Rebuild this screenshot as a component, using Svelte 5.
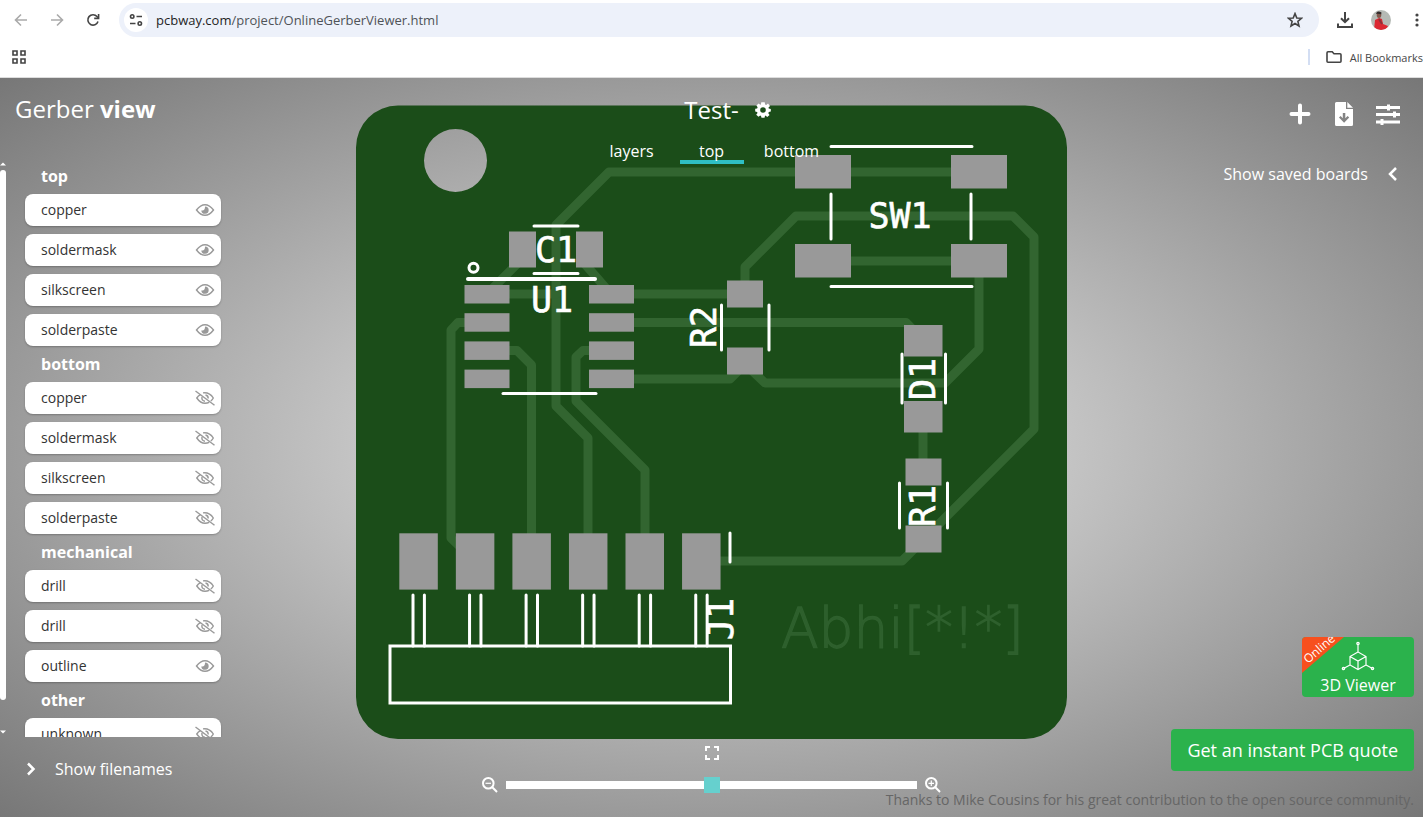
<!--
	Gerber Viewer

	Browser bar on top, board render with its layer list and controls below
-->
<script>
	let url = { host: 'pcbway.com', path: '/project/OnlineGerberViewer.html' };
	let boardName = 'Test-';
	let activeView = 'top';
	let zoom = 50;

	const views = ['layers', 'top', 'bottom'];

	let groups = [
		{
			name: 'top',
			layers: [
				{ name: 'copper', visible: true },
				{ name: 'soldermask', visible: true },
				{ name: 'silkscreen', visible: true },
				{ name: 'solderpaste', visible: true }
			]
		},
		{
			name: 'bottom',
			layers: [
				{ name: 'copper', visible: false },
				{ name: 'soldermask', visible: false },
				{ name: 'silkscreen', visible: false },
				{ name: 'solderpaste', visible: false }
			]
		},
		{
			name: 'mechanical',
			layers: [
				{ name: 'drill', visible: false },
				{ name: 'drill', visible: false },
				{ name: 'outline', visible: true }
			]
		},
		{
			name: 'other',
			layers: [{ name: 'unknown', visible: false }]
		}
	];

	// Copper traces, board units
	const traces = [
		'M979 172H609L556 225V406L588 438V561',
		'M645 561V470L576 401V357L583 350.5H611',
		'M487 294H556',
		'M523 258L487 294',
		'M584 263L611 294H745',
		'M611 322.5H906L923 340',
		'M611 379H730L745 364L765 383H945L979 349V261H823',
		'M745 294V267L796 216H1013L1034 237V429L923 540L902 561H701',
		'M487 322.5H458L451 330V538L475 561',
		'M487 350.5H517L531.5 365V561',
		'M923 417V472'
	];

	// Pads as [x, y, width, height]
	const pads = [
		[509, 231.5, 27, 36],
		[576, 231.5, 27, 36],
		[795, 155, 56, 33.5],
		[951, 155, 56, 33.5],
		[795, 244, 56, 33.5],
		[951, 244, 56, 33.5],
		[727, 280.5, 36, 27],
		[727, 347.5, 36, 27],
		[904, 325, 38.5, 31.5],
		[904, 401, 38.5, 31.5],
		[905.5, 458.5, 36, 27],
		[905.5, 525.5, 36, 27]
	];

	for (let i = 0; i < 4; i++) {
		pads.push([464.5, 285 + i * 28.2, 45, 18.5]);
		pads.push([589, 285 + i * 28.2, 45, 18.5]);
	}

	const pins = [0, 1, 2, 3, 4, 5].map((i) => i * 56.55);

	const silk = [
		'M534 226H578M534 273.5H578',
		'M503 393.5H596',
		'M831 146.5H972M831 286.5H972M831 194V239M971 194V239',
		'M721.5 305V350M769 305V350',
		'M902 354V403M945.5 354V403',
		'M899.5 483V528M947.5 483V528',
		'M730 533V562'
	];

	const labels = [
		{ text: 'C1', x: 556, y: 262 },
		{ text: 'U1', x: 552, y: 312 },
		{ text: 'SW1', x: 900, y: 228 },
		{ text: 'R2', x: 716, y: 327, rotate: -90 },
		{ text: 'D1', x: 935, y: 379, rotate: -90 },
		{ text: 'R1', x: 935, y: 506, rotate: -90 },
		{ text: 'J1', x: 733, y: 619, rotate: -90 }
	];

	function toggle(layer) {
		layer.visible = !layer.visible;
		groups = groups;
	}
</script>

<div class="window">
	<header class="browser">
		<div class="toolbar">
			<button class="tool faded" aria-label="Back">
				<svg width="14" height="14" viewBox="0 0 14 14"><path d="M13 7H2M7 1.5L1.5 7L7 12.5" /></svg>
			</button>
			<button class="tool faded" aria-label="Forward">
				<svg width="14" height="14" viewBox="0 0 14 14"><path d="M1 7h11M7 1.5L12.5 7L7 12.5" /></svg>
			</button>
			<button class="tool" aria-label="Reload">
				<svg width="14" height="14" viewBox="0 0 14 14">
					<path d="M12 8.5A5.2 5.2 0 1 1 11 3.5L12.5 5" />
					<path d="M12.6 1V5.4H8.2" />
				</svg>
			</button>
			<div class="address">
				<button class="site-info" aria-label="Site information">
					<svg width="14" height="14" viewBox="0 0 14 14">
						<circle cx="3.2" cy="3.5" r="1.7" /><path d="M7.5 3.5H13M1 10.5H6.5" />
						<circle cx="10.8" cy="10.5" r="1.7" />
					</svg>
				</button>
				<span class="url">{url.host}<span class="path">{url.path}</span></span>
				<button class="star" aria-label="Bookmark this page">
					<svg width="16" height="16" viewBox="0 0 16 16">
						<path d="M8 1.6L9.8 6L14.5 6.3L10.9 9.4L12 14L8 11.5L4 14L5.1 9.4L1.5 6.3L6.2 6Z" />
					</svg>
				</button>
			</div>
			<button class="tool" aria-label="Downloads">
				<svg class="heavy" width="16" height="16" viewBox="0 0 16 16">
					<path d="M8 0V10M4 6.2L8 10.2L12 6.2M1 11.5V15H15V11.5" />
				</svg>
			</button>
			<button class="tool profile" aria-label="Profile">
				<svg class="avatar" width="20" height="20" viewBox="0 0 20 20">
					<defs><clipPath id="avatar"><circle cx="10" cy="10" r="10" /></clipPath></defs>
					<g clip-path="url(#avatar)">
						<rect width="20" height="20" fill="#b5bab5" />
						<path d="M3 20L4 10L8 8L11 9L12 14L17 16L15 20Z" fill="#dc2832" />
						<ellipse cx="8" cy="5" rx="2.3" ry="3" fill="#80594c" />
						<path d="M5 4Q6 0 10.5 2.5L10.2 4.3L6.5 3.8Z" fill="#332a2a" />
						<path d="M8 9L11 14" stroke="#8f3238" stroke-width="2" />
					</g>
				</svg>
			</button>
			<button class="tool more" aria-label="Menu">
				<svg class="solid" width="4" height="14" viewBox="0 0 4 14">
					<circle cx="2" cy="2" r="1.6" /><circle cx="2" cy="7" r="1.6" /><circle cx="2" cy="12" r="1.6" />
				</svg>
			</button>
		</div>
		<div class="bookmarks">
			<button class="tool" aria-label="Apps">
				<svg width="14" height="14" viewBox="0 0 14 14">
					<path d="M1 1H5V5H1ZM9 1H13V5H9ZM1 9H5V13H1ZM9 9H13V13H9Z" />
				</svg>
			</button>
			<button class="all-bookmarks">
				<svg width="16" height="12" viewBox="0 0 16 12">
					<path d="M1 2V10.2Q1 11.2 2 11.2H14Q15 11.2 15 10.2V3.8Q15 2.8 14 2.8H8L6.2 .8H2Q1 .8 1 2Z" />
				</svg>
				All Bookmarks
			</button>
		</div>
	</header>

	<main class="viewer">
		<div class="board">
			<svg viewBox="356 105 711.5 634" role="img" aria-label="Board, top side">
				<path
					class="mask"
					fill-rule="evenodd"
					d="M398 105.5H1025A42 42 0 0 1 1067 147.5V697A42 42 0 0 1 1025 739H398A42 42 0 0 1 356 697V147.5A42 42 0 0 1 398 105.5Z
						M424 160.5a31.5 31.5 0 1 0 63 0a31.5 31.5 0 1 0 -63 0Z"
				/>
				<g class="traces">
					{#each traces as d}
						<path {d} />
					{/each}
				</g>
				<text class="copper-text" x="781" y="647">Abhi[*!*]</text>
				<g class="silk">
					{#each silk as d}
						<path {d} />
					{/each}
					<path class="thick" d="M468 279H595" />
					<circle cx="473.5" cy="267.8" r="4.5" />
					<rect x="390" y="646" width="340.5" height="57" />
					{#each pins as x}
						<path d="M{413 + x} 595V646M{424.4 + x} 595V646" />
					{/each}
				</g>
				<g class="pads">
					{#each pads as [x, y, width, height]}
						<rect {x} {y} {width} {height} />
					{/each}
					{#each pins as x}
						<rect x={399.3 + x} y="533.3" width="38.5" height="56.3" />
					{/each}
				</g>
				<g class="labels">
					{#each labels as label}
						<text transform="translate({label.x} {label.y}) rotate({label.rotate || 0})">{label.text}</text>
					{/each}
				</g>
			</svg>
		</div>

		<aside class="left">
			<h1>Gerber <b>view</b></h1>
			<div class="layer-area">
				<div class="scrollbar">
					<svg width="6" height="4" viewBox="0 0 6 4"><path d="M0 3.5L3 .5L6 3.5Z" /></svg>
					<div class="thumb"></div>
					<svg width="6" height="4" viewBox="0 0 6 4"><path d="M0 .5L3 3.5L6 .5Z" /></svg>
				</div>
				<div class="layers">
					{#each groups as group}
						<h2>{group.name}</h2>
						<ul>
							{#each group.layers as layer}
								<li>
									<button class="layer" aria-pressed={layer.visible} on:click={() => toggle(layer)}>
										{layer.name}
										<svg width="20" height="16" viewBox="0 0 20 16">
											{#if layer.visible}
												<path d="M1.5 8Q5.5 2.7 10 2.7T18.5 8Q14.5 13.3 10 13.3T1.5 8Z" />
												<path class="pupil" d="M10 4.4a3.7 3.7 0 1 1 -3.7 4q2 .6 2.9 -.6q1 -1.4 .8 -3.4Z" />
											{:else}
												<path d="M5.5 4.6Q3.2 5.8 1.8 8Q5.5 13.3 10 13.3Q12.3 13.3 14.2 12.4M8 2.9Q14.5 2 18.3 8Q17.4 9.7 15.8 11" />
												<path d="M7 6.8Q6.3 10.8 10 11.2M10.5 5Q13.3 5.5 13.2 8.5" />
												<path d="M.5 1L19.5 15.2" />
											{/if}
										</svg>
									</button>
								</li>
							{/each}
						</ul>
					{/each}
				</div>
			</div>
			<button class="filenames">
				<svg width="10" height="14" viewBox="0 0 10 14"><path d="M2 1.5L7.5 7L2 12.5" /></svg>
				Show filenames
			</button>
		</aside>

		<section class="center">
			<div class="title">
				<span class="name">{boardName}</span>
				<button class="icon" aria-label="Board settings">
					<svg width="16" height="16" viewBox="-8 -8 16 16">
						<path
							fill-rule="evenodd"
							d="M-1.7 -7.8H1.7L2.1 -5.6L3.2 -5.1L5 -6.4L7 -4L5.4 -2.3L5.8 -1.4L7.8 -1V1.6L5.8 2L5.3 3.2L6.6 5L4.2 7L2.5 5.6L2 5.9L1.5 7.8H-1.5L-2 5.9L-2.8 5.5L-4.5 6.8L-6.8 4.7L-5.5 3L-5.9 2L-7.8 1.6V-1.2L-5.9 -1.6L-5.4 -2.7L-6.6 -4.4L-4.3 -6.5L-2.8 -5.3L-2.1 -5.6ZM0 -2.8A2.8 2.8 0 1 0 0 2.8A2.8 2.8 0 1 0 0 -2.8Z"
						/>
					</svg>
				</button>
			</div>
			<nav class="tabs">
				{#each views as view}
					<button class:active={view === activeView} on:click={() => (activeView = view)}>{view}</button>
				{/each}
			</nav>
			<div class="zoom">
				<button class="icon" aria-label="Fit to screen">
					<svg width="14" height="14" viewBox="0 0 14 14">
						<path class="line" d="M1 5V1H5M9 1H13V5M13 9V13H9M5 13H1V9" />
					</svg>
				</button>
				<div class="zoom-row">
					<button class="icon" aria-label="Zoom out">
						<svg width="16" height="16" viewBox="0 0 16 16">
							<circle class="line" cx="6.3" cy="6.3" r="5.3" />
							<path class="line" d="M10.3 10.3L15 15" /><path class="fine" d="M3.5 6.3H9" />
						</svg>
					</button>
					<input type="range" min="0" max="100" aria-label="Zoom" bind:value={zoom} />
					<button class="icon" aria-label="Zoom in">
						<svg width="16" height="16" viewBox="0 0 16 16">
							<circle class="line" cx="6.3" cy="6.3" r="5.3" />
							<path class="line" d="M10.3 10.3L15 15" /><path class="fine" d="M3.5 6.3H9M6.3 3.5V9" />
						</svg>
					</button>
				</div>
			</div>
		</section>

		<aside class="right">
			<div class="actions">
				<button class="icon" aria-label="Add board">
					<svg width="24" height="24" viewBox="0 0 24 24"><path class="plus" d="M12 3.5V20.5M3.5 12H20.5" /></svg>
				</button>
				<button class="icon" aria-label="Download board">
					<svg width="24" height="24" viewBox="0 0 24 24">
						<path
							fill-rule="evenodd"
							d="M3 1.5Q3 0 4.5 0H14V7H21V22.5Q21 24 19.5 24H4.5Q3 24 3 22.5ZM10.8 11V16.2L8.6 14L7 15.6L12.1 20.8L17.2 15.6L15.6 14L13.3 16.2V11Z"
						/>
						<path d="M15.3 0L21 5.7H15.3Z" />
					</svg>
				</button>
				<button class="icon" aria-label="View options">
					<svg width="24" height="24" viewBox="0 0 24 24">
						<path d="M0 4H11V2.5H14V4H24V7H14V8.5H11V7H0ZM0 11H17V9.5H20V11H24V14H20V15.5H17V14H0ZM0 18.5H4.5V17H7.5V18.5H24V21.5H7.5V23H4.5V21.5H0Z" />
					</svg>
				</button>
			</div>
			<button class="saved">
				Show saved boards
				<svg width="10" height="14" viewBox="0 0 10 14"><path d="M8 1L2 7L8 13" /></svg>
			</button>
			<a class="viewer-3d" href="#viewer">
				<svg class="ribbon" width="42" height="36" viewBox="0 0 42 36">
					<path d="M0 0H42L0 36Z" />
					<text transform="translate(6 27) rotate(-41)">Online</text>
				</svg>
				<svg class="cube" width="34" height="30" viewBox="0 0 34 30">
					<path d="M17 2.5V11L25 15.5V24L17 28.5L9 24V15.5L17 11M9 15.5L17 20L25 15.5M17 20V28.5M9 24L2.5 27.5M25 24L31.5 27.5" />
					<circle cx="17" cy="2.5" r="1.2" /><circle cx="2.5" cy="27.5" r="1.2" /><circle cx="31.5" cy="27.5" r="1.2" />
				</svg>
				3D Viewer
			</a>
			<a class="quote" href="#quote">Get an instant PCB quote</a>
			<p class="thanks">Thanks to Mike Cousins for his great contribution to the open source community.</p>
		</aside>
	</main>
</div>

<style>
	:global(body) {
		background: #fff;
	}

	.window {
		display: flex;
		flex-direction: column;
		min-height: 100vh;
		overflow: hidden;
		font-family: 'Open Sans', 'Noto Sans', sans-serif;
	}

	.window * {
		box-sizing: border-box;
	}

	button {
		padding: 0;
		border: 0;
		background: none;
		color: inherit;
		font: inherit;
		cursor: pointer;
	}

	a {
		color: inherit;
		text-decoration: none;
	}

	svg {
		display: block;
		flex: none;
	}

	/* Browser bar */
	.browser {
		height: 78px;
		border-bottom: 1px solid #ddd;
		color: #474747;
		overflow: hidden;
	}

	.browser svg {
		fill: none;
		stroke: #444;
		stroke-width: 1.6;
	}

	.browser svg.heavy {
		stroke-width: 2;
	}

	.browser svg.solid {
		fill: #444;
		stroke: none;
	}

	.browser svg.avatar {
		stroke: none;
	}

	.toolbar {
		display: flex;
		align-items: center;
		height: 40px;
		padding-left: 14px;
	}

	.tool {
		margin-right: 22px;
	}

	.faded svg {
		stroke: #aaa;
	}

	.address {
		display: flex;
		flex: 1;
		align-items: center;
		height: 34px;
		margin: 0 18px 0 -3px;
		padding: 0 16px 0 5px;
		border-radius: 17px;
		background: #edf1fa;
	}

	.site-info {
		display: grid;
		place-items: center;
		width: 24px;
		height: 24px;
		border-radius: 12px;
		background: #fff;
	}

	.url {
		flex: 1;
		margin-left: 8px;
		color: #1f1f1f;
		font-size: 13px;
	}

	.path {
		color: #4f5358;
	}

	.toolbar .profile {
		margin: 0 24px 0 -4px;
	}

	.toolbar .more {
		margin-right: 4px;
	}

	.bookmarks {
		display: flex;
		align-items: center;
		justify-content: space-between;
		height: 34px;
		padding-left: 12px;
	}

	.all-bookmarks {
		display: flex;
		align-items: center;
		gap: 8px;
		height: 16px;
		padding-left: 16px;
		border-left: 2px solid #d3def3;
		font-size: 11px;
		white-space: nowrap;
	}

	/* Viewer */
	.viewer {
		display: grid;
		grid-template-rows: minmax(0, 1fr);
		grid-template-columns: 280px 1fr 280px;
		height: calc(100vh - 78px);
		background: radial-gradient(#eee, #777);
		color: #fff;
	}

	.viewer > * {
		grid-row: 1;
		min-height: 0;
	}

	.viewer svg {
		fill: #fff;
	}

	.board {
		grid-column: 1 / -1;
		padding-top: 27px;
	}

	.board svg {
		width: 50%;
		margin: 0 auto;
	}

	.mask {
		fill: #1b4d19;
	}

	.traces {
		fill: none;
		stroke: #326530;
		stroke-width: 9;
		stroke-linejoin: round;
		stroke-linecap: round;
	}

	.pads {
		fill: #999;
	}

	.silk {
		fill: none;
		stroke: #fff;
		stroke-width: 3;
		stroke-linecap: round;
	}

	.silk .thick {
		stroke-width: 4;
	}

	.labels {
		stroke: #fff;
		stroke-width: 0.6;
		font-family: 'DejaVu Sans Mono', monospace;
		font-size: 35px;
		text-anchor: middle;
	}

	.copper-text {
		fill: #2e602d;
		stroke: #2e602d;
		stroke-width: 1.4;
		font-family: 'DejaVu Sans', sans-serif;
		font-size: 55px;
		font-weight: 200;
	}

	/* Left panel */
	.left {
		grid-column: 1;
		z-index: 1;
		display: flex;
		flex-direction: column;
	}

	h1 {
		height: 80px;
		margin: 0;
		padding: 13px 0 0 15px;
		font-size: 24px;
		font-weight: 400;
		line-height: 36px;
	}

	.layer-area {
		display: flex;
		flex: 1;
		min-height: 0;
		overflow: hidden;
	}

	.scrollbar {
		display: flex;
		flex-direction: column;
		gap: 4px;
		width: 25px;
		padding: 4px 0 3px;
	}

	.thumb {
		width: 6px;
		flex: 1;
		margin-bottom: 26px;
		border-radius: 3px;
		background: #fff;
	}

	.layers {
		width: 196px;
	}

	h2 {
		margin: 0;
		padding-left: 16px;
		font-size: 16px;
		font-weight: 700;
		line-height: 36px;
	}

	ul {
		display: grid;
		gap: 8px;
		margin: 0;
		padding: 0;
		list-style: none;
	}

	.layer {
		display: flex;
		align-items: center;
		justify-content: space-between;
		width: 100%;
		height: 32px;
		padding: 0 6px 1px 16px;
		border-radius: 8px;
		background: #fff;
		box-shadow: 0 1px 2px rgba(0, 0, 0, 0.25);
		color: #333;
		font-size: 14px;
	}

	.layer svg {
		fill: none;
		stroke: #999;
		stroke-width: 1.4;
	}

	.layer svg .pupil {
		fill: #999;
		stroke: none;
	}

	.filenames {
		display: flex;
		align-items: center;
		gap: 19px;
		height: 64px;
		margin: 0 0 16px;
		padding-left: 26px;
		font-size: 16px;
	}

	.viewer .filenames svg,
	.viewer .saved svg {
		fill: none;
		stroke: #fff;
		stroke-width: 2.5;
	}

	/* Center column */
	.center {
		grid-column: 2;
		z-index: 1;
		display: flex;
		flex-direction: column;
		align-items: center;
	}

	.title {
		display: grid;
		grid-template-columns: 1fr auto 1fr;
		align-items: center;
		gap: 16px;
		width: 100%;
		height: 36px;
		margin-top: 14px;
		font-size: 24px;
		line-height: 32px;
	}

	.title .name {
		grid-column: 2;
	}

	.tabs {
		display: flex;
		gap: 16px;
		margin-top: 10px;
		font-size: 16px;
	}

	.tabs button {
		width: 64px;
		height: 26px;
		border-bottom: 4px solid transparent;
		line-height: 26px;
	}

	.tabs .active {
		border-color: #2fbfc4;
	}

	.zoom {
		display: flex;
		flex-direction: column;
		align-items: center;
		gap: 17px;
		width: min(459px, 100%);
		margin: auto 0 24px;
	}

	.zoom-row {
		display: flex;
		align-items: center;
		gap: 8px;
		width: 100%;
	}

	.viewer .line {
		fill: none;
		stroke: #fff;
		stroke-width: 2;
	}

	.viewer .fine {
		stroke: #fff;
		stroke-width: 1.2;
	}

	input[type='range'] {
		flex: 1;
		height: 8px;
		margin: 0;
		background: #fff;
		appearance: none;
	}

	input[type='range']::-webkit-slider-thumb {
		width: 16px;
		height: 16px;
		background: #66d0ce;
		appearance: none;
	}

	/* Right panel */
	.right {
		grid-column: 3;
		z-index: 1;
		display: flex;
		flex-direction: column;
		align-items: flex-end;
		padding-right: 9px;
	}

	.actions {
		display: flex;
		gap: 20px;
		margin: 24px 14px 0 0;
	}

	.plus {
		stroke: #fff;
		stroke-width: 4;
		stroke-linecap: round;
	}

	.saved {
		display: flex;
		align-items: center;
		gap: 20px;
		margin: 36px 16px 0 0;
		font-size: 16px;
		line-height: 24px;
	}

	.viewer-3d {
		position: relative;
		display: flex;
		flex-direction: column;
		align-items: center;
		width: 112px;
		height: 60px;
		margin-top: auto;
		padding-top: 4px;
		overflow: hidden;
		border-radius: 4px;
		background: #2bb24c;
		font-size: 16px;
		line-height: 28px;
	}

	.viewer .cube {
		fill: none;
		stroke: #fff;
		stroke-width: 1.2;
	}

	.ribbon {
		position: absolute;
		top: 0;
		left: 0;
		font-size: 12px;
	}

	.ribbon path {
		fill: #f7501e;
	}

	.quote {
		margin-top: 32px;
		padding: 0 16px;
		border-radius: 4px;
		background: #2bb24c;
		font-size: 18px;
		line-height: 42px;
		white-space: nowrap;
	}

	.thanks {
		margin: 19px 0 7px;
		color: #666;
		font-size: 14px;
		line-height: 20px;
		white-space: nowrap;
	}
</style>
